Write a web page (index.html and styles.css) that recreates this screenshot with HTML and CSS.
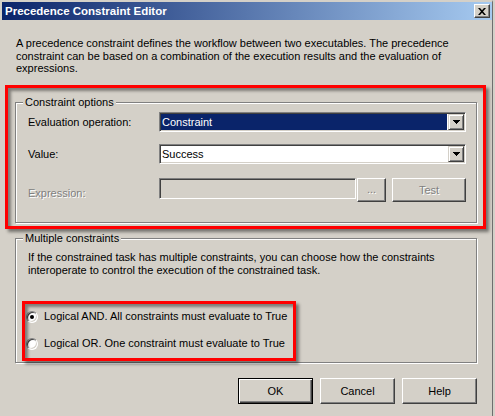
FILE: index.html
```html
<!DOCTYPE html>
<html>
<head>
<meta charset="utf-8">
<link rel="stylesheet" href="styles.css">
</head>
<body>
<div class="window">
  <div class="titlebar">
    <span class="title">Precedence Constraint Editor</span>
    <span class="close"><svg width="8" height="7" viewBox="0 0 8 7"><path d="M0 0h2l2 2.2L6 0h2L5 3.5 8 7H6L4 4.8 2 7H0l3-3.5z" fill="#000"/></svg></span>
  </div>
  <div class="content">
    <p class="desc">A precedence constraint defines the workflow between two executables. The precedence<br>constraint can be based on a combination of the execution results and the evaluation of<br>expressions.</p>

    <div class="group g1">
      <span class="legend">Constraint options</span>
      <div class="row r1">
        <span class="label">Evaluation operation:</span>
        <div class="combo focus">
          <span class="combo-value">Constraint</span>
          <span class="drop"><svg width="7" height="4" viewBox="0 0 7 4"><path d="M0 0h7v1H0zM1 1h5v1H1zM2 2h3v1H2zM3 3h1v1H3z" fill="#000"/></svg></span>
        </div>
      </div>
      <div class="row r2">
        <span class="label">Value:</span>
        <div class="combo">
          <span class="combo-value">Success</span>
          <span class="drop"><svg width="7" height="4" viewBox="0 0 7 4"><path d="M0 0h7v1H0zM1 1h5v1H1zM2 2h3v1H2zM3 3h1v1H3z" fill="#000"/></svg></span>
        </div>
      </div>
      <div class="row r3">
        <span class="label disabled">Expression:</span>
        <div class="expr">
          <span class="field"></span>
          <span class="btn small disabled">...</span>
          <span class="btn test disabled">Test</span>
        </div>
      </div>
    </div>

    <div class="group g2">
      <span class="legend">Multiple constraints</span>
      <p class="info">If the constrained task has multiple constraints, you can choose how the constraints<br>interoperate to control the execution of the constrained task.</p>
      <div class="radios">
        <div class="radio-row"><span class="radio checked"></span><span>Logical AND. All constraints must evaluate to True</span></div>
        <div class="radio-row"><span class="radio"></span><span>Logical OR. One constraint must evaluate to True</span></div>
      </div>
    </div>

    <div class="buttons">
      <span class="btn dlg default">OK</span>
      <span class="btn dlg">Cancel</span>
      <span class="btn dlg">Help</span>
    </div>
  </div>
  <div class="mark m1"></div>
  <div class="mark m2"></div>
</div>
</body>
</html>
```

FILE: styles.css
```css
html, body {
  margin: 0;
  padding: 0;
  background: #d4d0c8;
}
body {
  font-family: "Liberation Sans", Arial, sans-serif;
  font-size: 11px;
  color: #000;
}
.window {
  position: relative;
  width: 493px;
  height: 416px;
  box-sizing: border-box;
  border-left: 2px solid #d4d0c8;
  border-top: 2px solid #d4d0c8;
  border-right: 1px solid #6e6e6e;
  background: #d4d0c8;
  overflow: hidden;
}
.titlebar {
  height: 18px;
  display: flex;
  align-items: center;
  justify-content: space-between;
  padding: 0 2px 0 3px;
  background: linear-gradient(to right, #0a246a, #a6caf0);
}
.title {
  color: #fff;
  font-weight: bold;
  font-size: 11.5px;
  line-height: 18px;
  white-space: nowrap;
}
.close {
  width: 16px;
  height: 14px;
  box-sizing: border-box;
  background: #d4d0c8;
  border: 1px solid;
  border-color: #fff #404040 #404040 #fff;
  box-shadow: inset -1px -1px 0 #808080;
  display: flex;
  align-items: center;
  justify-content: center;
}
.close svg { display: block; }
.content {
  padding: 0 15px 0 13px;
}
.desc {
  margin: 17px 0 0 1px;
  height: 39px;
  line-height: 12.5px;
  white-space: nowrap;
}
.group {
  position: relative;
  width: 462px;
  box-sizing: border-box;
  border: 1px solid #808080;
  box-shadow: inset 1px 1px 0 #fff, 1px 1px 0 #fff;
}
.legend {
  position: absolute;
  top: -7px;
  left: 7px;
  padding: 0 2px;
  line-height: 13px;
  background: #d4d0c8;
  white-space: nowrap;
}
.g1 {
  margin-top: 26px;
  height: 121px;
  padding: 9px 0 0 12px;
}
.row {
  display: grid;
  grid-template-columns: 131px 307px;
  align-items: center;
}
.r1, .r2 { height: 20px; }
.r2 { margin-top: 12px; }
.r3 {
  margin-top: 14px;
  height: 24px;
  align-items: start;
}
.label {
  line-height: 13px;
  white-space: nowrap;
}
.r3 .label { padding-top: 9px; }
.disabled {
  color: #808080;
  text-shadow: 1px 1px 0 #fff;
}
.combo {
  display: flex;
  height: 20px;
  box-sizing: border-box;
  padding: 1px;
  border: 1px solid;
  border-color: #808080 #fff #fff #808080;
  box-shadow: inset 1px 1px 0 #404040, inset -1px -1px 0 #d4d0c8;
  background: #fff;
}
.combo-value {
  flex: 1;
  line-height: 16px;
  padding-left: 1px;
  margin-right: 1px;
}
.combo.focus .combo-value {
  background: #0a246a;
  color: #fff;
}
.drop {
  width: 16px;
  height: 16px;
  box-sizing: border-box;
  background: #d4d0c8;
  border: 1px solid;
  border-color: #d4d0c8 #404040 #404040 #d4d0c8;
  box-shadow: inset 1px 1px 0 #fff, inset -1px -1px 0 #808080;
  display: flex;
  align-items: center;
  justify-content: center;
}
.drop svg { display: block; }
.expr {
  display: flex;
  align-items: flex-start;
}
.field {
  width: 197px;
  height: 21px;
  box-sizing: border-box;
  border: 1px solid;
  border-color: #808080 #fff #fff #808080;
  box-shadow: inset 1px 1px 0 #404040, inset -1px -1px 0 #d4d0c8;
  background: #d4d0c8;
}
.btn {
  box-sizing: border-box;
  display: flex;
  align-items: center;
  justify-content: center;
  background: #d4d0c8;
  border: 1px solid;
  border-color: #fff #404040 #404040 #fff;
  box-shadow: inset -1px -1px 0 #808080;
  white-space: nowrap;
}
.small {
  width: 29px;
  height: 24px;
  margin-left: 1px;
  padding-bottom: 3px;
}
.test {
  width: 74px;
  height: 24px;
  margin-left: 6px;
}
.g2 {
  margin-top: 15px;
  height: 125px;
  padding: 12px 0 0 12px;
}
.info {
  margin: 0;
  line-height: 12.5px;
  white-space: nowrap;
}
.radios {
  margin: 34px 0 0 -2px;
  display: flex;
  flex-direction: column;
  gap: 14px;
}
.radio-row {
  display: flex;
  align-items: center;
  gap: 6px;
  height: 13px;
  line-height: 13px;
  white-space: nowrap;
}
.radio {
  position: relative;
  width: 12px;
  height: 12px;
  box-sizing: border-box;
  border-radius: 50%;
  border: 1px solid;
  border-color: #808080 #fff #fff #808080;
  box-shadow: inset 1px 1px 0 #404040, inset -1px -1px 0 #d4d0c8;
  background: #fff;
  flex: none;
}
.radio.checked::after {
  content: "";
  position: absolute;
  left: 3px;
  top: 3px;
  width: 4px;
  height: 4px;
  border-radius: 50%;
  background: #000;
}
.buttons {
  margin-top: 15px;
  display: flex;
  justify-content: flex-end;
  gap: 7px;
}
.dlg {
  width: 75px;
  height: 26px;
}
.default {
  border: 1px solid #000;
  box-shadow: inset 1px 1px 0 #fff, inset -1px -1px 0 #404040, inset -2px -2px 0 #808080;
}
.mark {
  position: absolute;
  box-sizing: border-box;
  border: 3px solid #ff0000;
  box-shadow: 3px 3px 3px rgba(0, 0, 0, 0.45), inset 3px 3px 3px rgba(0, 0, 0, 0.4);
  pointer-events: none;
}
.m1 {
  left: 3px;
  top: 83px;
  width: 481px;
  height: 144px;
}
.m2 {
  left: 20px;
  top: 299px;
  width: 274px;
  height: 60px;
}
```
